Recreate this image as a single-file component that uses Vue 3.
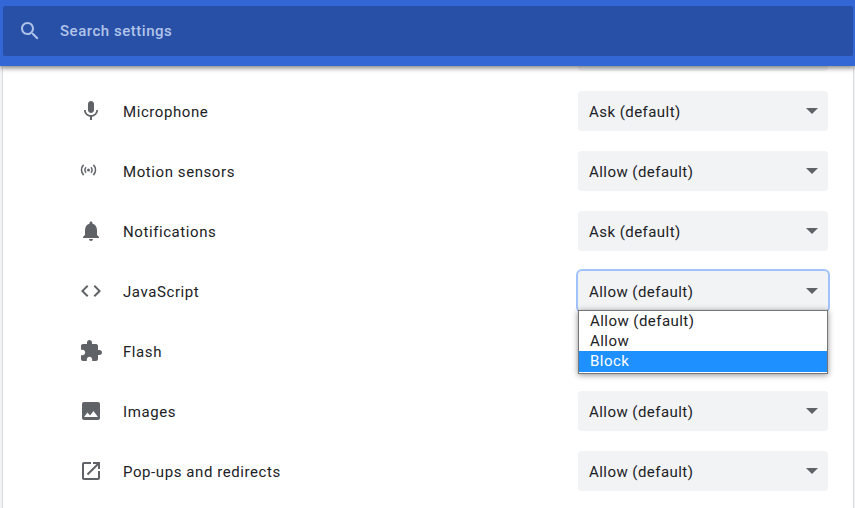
<script setup>
const icons = {
  mic: 'M12 14c1.66 0 2.99-1.34 2.99-3L15 5c0-1.66-1.34-3-3-3S9 3.34 9 5v6c0 1.66 1.34 3 3 3zm5.3-3c0 3-2.54 5.1-5.3 5.1S6.7 14 6.7 11H5c0 3.41 2.72 6.23 6 6.72V21h2v-3.28c3.28-.48 6-3.3 6-6.72h-1.7z',
  bell: 'M12 22c1.1 0 2-.9 2-2h-4c0 1.1.89 2 2 2zm6-6v-5c0-3.07-1.64-5.64-4.5-6.32V4c0-.83-.67-1.5-1.5-1.5s-1.5.67-1.5 1.5v.68C7.63 5.36 6 7.92 6 11v5l-2 2v1h16v-1l-2-2z',
  code: 'M9.4 16.6L4.8 12l4.6-4.6L8 6l-6 6 6 6 1.4-1.4zm5.2 0l4.6-4.6-4.6-4.6L16 6l6 6-6 6-1.4-1.4z',
  puzzle: 'M20.5 11H19V7c0-1.1-.9-2-2-2h-4V3.5C13 2.12 11.88 1 10.5 1S8 2.12 8 3.5V5H4c-1.1 0-1.99.9-1.99 2v3.8H3.5c1.49 0 2.7 1.21 2.7 2.7s-1.21 2.7-2.7 2.7H2V20c0 1.1.9 2 2 2h3.8v-1.5c0-1.49 1.21-2.7 2.7-2.7 1.49 0 2.7 1.21 2.7 2.7V22H17c1.1 0 2-.9 2-2v-4h1.5c1.38 0 2.5-1.12 2.5-2.5S21.88 11 20.5 11z',
  photo: 'M21 19V5c0-1.1-.9-2-2-2H5c-1.1 0-2 .9-2 2v14c0 1.1.9 2 2 2h14c1.1 0 2-.9 2-2zM8.5 13.5l2.5 3.01L14.5 12l4.5 6H5l3.5-4.5z',
  popup: 'M19 19H5V5h7V3H5c-1.11 0-2 .9-2 2v14c0 1.1.89 2 2 2h14c1.1 0 2-.9 2-2v-7h-2v7zM14 3v2h3.59l-9.83 9.83 1.41 1.41L19 6.41V10h2V3h-7z',
}

// first row sits behind the toolbar, the Flash select behind the open list
const rows = [
  { name: '', value: '' },
  { name: 'Microphone', icon: 'mic', value: 'Ask (default)' },
  { name: 'Motion sensors', icon: 'sensors', value: 'Allow (default)' },
  { name: 'Notifications', icon: 'bell', value: 'Ask (default)' },
  { name: 'JavaScript', icon: 'code', value: 'Allow (default)', open: true },
  { name: 'Flash', icon: 'puzzle', value: '' },
  { name: 'Images', icon: 'photo', value: 'Allow (default)' },
  { name: 'Pop-ups and redirects', icon: 'popup', value: 'Allow (default)' },
]

const options = ['Allow (default)', 'Allow', 'Block']
</script>

<template>
  <div class="page">
    <header class="toolbar">
      <div class="search">
        <svg class="search-icon" viewBox="0 0 24 24" width="24" height="24">
          <path d="M15.5 14h-.79l-.28-.27C15.41 12.59 16 11.11 16 9.5 16 5.91 13.09 3 9.5 3S3 5.91 3 9.5 5.91 16 9.5 16c1.61 0 3.09-.59 4.23-1.57l.27.28v.79l5 4.99L20.49 19l-4.99-5zm-6 0C7.01 14 5 11.99 5 9.5S7.01 5 9.5 5 14 7.01 14 9.5 11.99 14 9.5 14z" />
        </svg>
        <span class="placeholder">Search settings</span>
      </div>
    </header>

    <main class="card">
      <div v-for="(row, i) in rows" :key="i" class="row">
        <svg v-if="row.icon === 'sensors'" class="icon" viewBox="0 0 24 24" width="24" height="24">
          <circle cx="9.5" cy="11" r="1.5" />
          <g class="arcs">
            <path d="M7.1 8.2a3.9 3.9 0 0 0 0 5.6M11.9 8.2a3.9 3.9 0 0 1 0 5.6" />
            <path d="M4.6 5.9a7.2 7.2 0 0 0 0 10.2M14.4 5.9a7.2 7.2 0 0 1 0 10.2" />
          </g>
        </svg>
        <svg v-else-if="row.icon" class="icon" viewBox="0 0 24 24" width="24" height="24">
          <path :d="icons[row.icon]" />
        </svg>
        <span class="label">{{ row.name }}</span>
        <div class="select" :class="{ focused: row.open }">
          <span class="value">{{ row.value }}</span>
          <i class="arrow"></i>
          <ul v-if="row.open" class="popup">
            <li v-for="opt in options" :key="opt" :class="{ active: opt === 'Block' }">{{ opt }}</li>
          </ul>
        </div>
      </div>
    </main>
  </div>
</template>

<style>
html,
body {
  margin: 0;
  overflow: hidden;
}
</style>

<style scoped>
.page {
  position: relative;
  width: 855px;
  height: 508px;
  overflow: hidden;
  background: #f1f3f4;
  font-family: Roboto, "Liberation Sans", sans-serif;
  font-size: 15px;
  color: #202124;
}

.toolbar {
  position: absolute;
  top: 0;
  left: 0;
  right: 0;
  z-index: 2;
  height: 66px;
  box-sizing: border-box;
  padding: 6px 2px 10px 3px;
  background: #3367d6;
  box-shadow: 0 2px 5px rgba(0, 0, 0, 0.5);
}

.search {
  display: flex;
  align-items: center;
  height: 50px;
  padding-left: 15px;
  background: #2850a7;
  border-radius: 2px;
}

.search-icon {
  fill: #aec2e9;
  flex: none;
}

.placeholder {
  margin-left: 18px;
  font-weight: 500;
  letter-spacing: 0.53px;
  color: #b1c4ea;
}

.card {
  box-sizing: border-box;
  height: 508px;
  margin: 0 1px 0 2px;
  padding: 21px 25px 0 76px;
  background: #fff;
  border-left: 1px solid #dadce0;
  border-right: 1px solid #dadce0;
}

.row {
  display: flex;
  align-items: center;
  height: 60px;
}

.icon {
  flex: none;
  fill: #5f6368;
}

.arcs {
  fill: none;
  stroke: #5f6368;
  stroke-width: 1.5;
}

.label {
  flex: 1;
  margin-left: 20px;
  padding-top: 2px;
  letter-spacing: 0.58px;
}

.select {
  position: relative;
  display: flex;
  align-items: center;
  justify-content: space-between;
  box-sizing: border-box;
  width: 250px;
  height: 40px;
  padding: 0 10px 0 11px;
  background: #f1f3f4;
  border-radius: 4px;
  letter-spacing: 0.45px;
}

.value {
  padding-top: 2px;
}

.select.focused {
  box-shadow: 0 0 0 2px #a1c2fa;
}

.arrow {
  width: 0;
  height: 0;
  border-left: 6.5px solid transparent;
  border-right: 6.5px solid transparent;
  border-top: 6.5px solid #5f6368;
}

.popup {
  position: absolute;
  top: 39px;
  left: 0;
  z-index: 1;
  width: 250px;
  box-sizing: border-box;
  margin: 0;
  padding: 0 0 1px;
  list-style: none;
  background: #fff;
  border: 1px solid #767676;
  box-shadow: 0 1px 6px rgba(0, 0, 0, 0.45);
}

.popup li {
  height: 20px;
  line-height: 20px;
  padding-left: 11px;
}

.popup li.active {
  height: 21px;
  background: #1e90ff;
  color: #fff;
}
</style>
